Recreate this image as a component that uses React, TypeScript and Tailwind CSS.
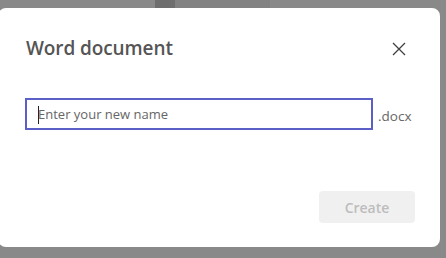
export default function App() {
  return (
    <div className="relative w-[446px] h-[258px] overflow-hidden bg-[#898989]" style={{ fontFamily: '"Open Sans", "Noto Sans", sans-serif' }}>
      <div className="absolute left-[155px] top-0 w-[20px] h-[8px] bg-[#6e6e6e]" />
      <div className="absolute left-[175px] top-0 w-[95px] h-[8px] bg-[#828282]" />
      <div className="absolute left-[-2px] top-[8px] w-[442px] h-[239px] bg-white rounded-[8px] flex flex-col">
        <div className="flex items-center justify-between pl-[28px] pr-[34px] pt-[26px]">
          <h1 className="text-[19px] leading-[28px] font-semibold text-[#555555] tracking-[-0.1px]">Word document</h1>
          <svg width="14" height="14" viewBox="0 0 14 14" className="mt-[2px]">
            <path d="M1 1L13 13M13 1L1 13" stroke="#404040" strokeWidth="1.3" />
          </svg>
        </div>
        <div className="flex items-end pl-[27px] mt-[36px]">
          <div className="w-[348px] h-[32px] border-2 border-[#5b5fc7] flex items-center pl-[11px] pt-[2px]">
            <span className="w-px h-[18px] bg-[#222]" />
            <span className="text-[13px] text-[#666] ml-[-1px]">Enter your new name</span>
          </div>
          <span className="ml-[5px] mb-[4px] text-[13.5px] text-[#666]">.docx</span>
        </div>
        <div className="flex justify-end pr-[25px] mt-[61px]">
          <div className="w-[96px] h-[32px] bg-[#f0f0f0] rounded-[4px] flex items-center justify-center text-[14px] font-semibold text-[#bdbdbd]">Create</div>
        </div>
      </div>
    </div>
  );
}
